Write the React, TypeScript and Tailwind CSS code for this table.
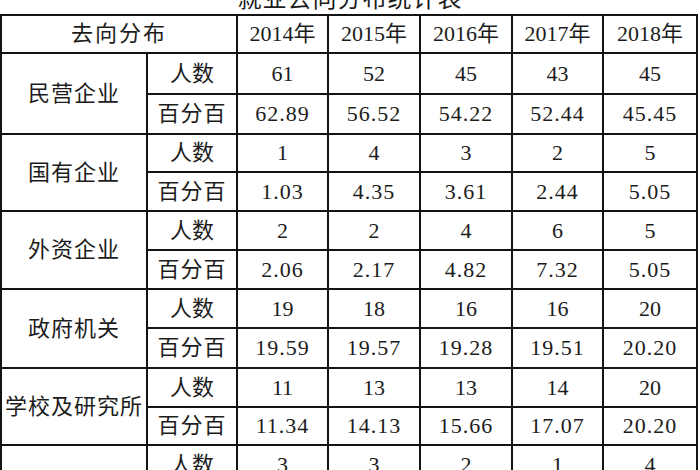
import React from 'react';

type Group = {
    name: string;
    counts: string[];
    percents: string[];
    heights: [string, string];
};

const years = ['2014年', '2015年', '2016年', '2017年', '2018年'];

const groups: Group[] = [
    { name: '民营企业', counts: ['61', '52', '45', '43', '45'], percents: ['62.89', '56.52', '54.22', '52.44', '45.45'], heights: ['h-[41px]', 'h-[40px]'] },
    { name: '国有企业', counts: ['1', '4', '3', '2', '5'], percents: ['1.03', '4.35', '3.61', '2.44', '5.05'], heights: ['h-[38px]', 'h-[39px]'] },
    { name: '外资企业', counts: ['2', '2', '4', '6', '5'], percents: ['2.06', '2.17', '4.82', '7.32', '5.05'], heights: ['h-[39px]', 'h-[39px]'] },
    { name: '政府机关', counts: ['19', '18', '16', '16', '20'], percents: ['19.59', '19.57', '19.28', '19.51', '20.20'], heights: ['h-[39px]', 'h-[40px]'] },
    { name: '学校及研究所', counts: ['11', '13', '13', '14', '20'], percents: ['11.34', '14.13', '15.66', '17.07', '20.20'], heights: ['h-[39px]', 'h-[38px]'] },
    { name: '其他企业单位', counts: ['3', '3', '2', '1', '4'], percents: ['3.09', '3.26', '2.41', '1.22', '4.04'], heights: ['h-[39px]', 'h-[39px]'] },
];

const cell = 'border-2 border-[#141414] text-center p-0 align-middle';

const App: React.FC = () => {
    return (
        <div
            className="w-[700px] h-[470px] overflow-hidden bg-white text-[#1c1c1c]"
            style={{ fontFamily: '"Liberation Serif", "Noto Sans CJK SC", serif' }}
        >
            {/* Title, mostly cut off by the top edge */}
            <div className="h-[14px] overflow-hidden flex justify-center">
                <div className="-mt-[13px] text-[24px] leading-[24px] tracking-[1px]">就业去向分布统计表</div>
            </div>

            <table className="table-fixed border-collapse w-[698px] text-[22px] leading-none">
                <colgroup>
                    <col className="w-[146px]" />
                    <col className="w-[90px]" />
                    <col className="w-[91px]" />
                    <col className="w-[92px]" />
                    <col className="w-[92px]" />
                    <col className="w-[91px]" />
                    <col className="w-[94px]" />
                </colgroup>
                <tbody>
                    <tr className="h-[38px]">
                        <td colSpan={2} className={cell + ' tracking-[2px]'}>去向分布</td>
                        {years.map((y) => (
                            <td key={y} className={cell}>{y}</td>
                        ))}
                    </tr>
                    {groups.map((g) => (
                        <React.Fragment key={g.name}>
                            <tr className={g.heights[0]}>
                                <td rowSpan={2} className={cell + ' whitespace-nowrap tracking-[1px]'}>{g.name}</td>
                                <td className={cell}>人数</td>
                                {g.counts.map((v, i) => (
                                    <td key={i} className={cell}>{v}</td>
                                ))}
                            </tr>
                            <tr className={g.heights[1]}>
                                <td className={cell + ' tracking-[1px]'}>百分百</td>
                                {g.percents.map((v, i) => (
                                    <td key={i} className={cell + ' tracking-[1px]'}>{v}</td>
                                ))}
                            </tr>
                        </React.Fragment>
                    ))}
                </tbody>
            </table>
        </div>
    );
};

export default App;
